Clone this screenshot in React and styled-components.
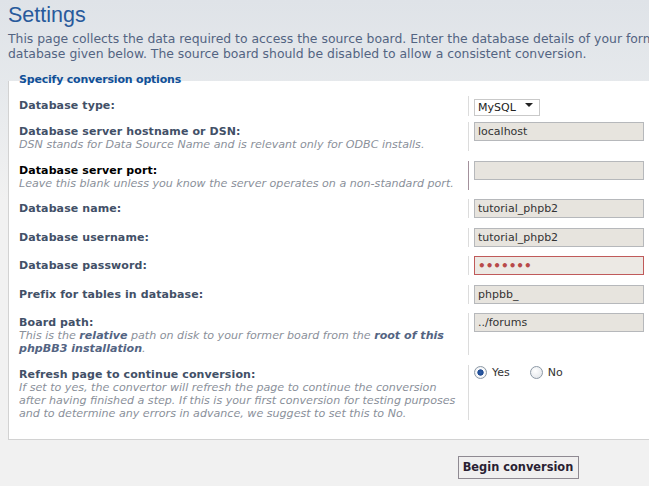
import React from "react";
import styled, { createGlobalStyle } from "styled-components";

const GlobalStyle = createGlobalStyle`
  html, body {
    margin: 0;
    padding: 0;
    overflow: hidden;
  }
  body {
    background: linear-gradient(#dfe3e8 0, #e6e9ec 90px, #f1f1f1 200px) no-repeat #f1f1f1;
    min-height: 486px;
    font-family: "DejaVu Sans", Verdana, sans-serif;
  }
`;

const Page = styled.div`
  width: 1020px;
  padding: 2px 8px 0;
`;

const Title = styled.h1`
  margin: 0;
  font-family: "Liberation Sans", Arial, sans-serif;
  font-weight: normal;
  font-size: 21.5px;
  line-height: 26px;
  color: #285a9c;
`;

const Intro = styled.p`
  margin: 3px 0 0;
  font-size: 12.4px;
  line-height: 15px;
  color: #536482;
  white-space: nowrap;
`;

const Panel = styled.section`
  display: flex;
  flex-direction: column;
  margin-top: 20px;
  padding: 0 10px 19px;
  border: 1px solid #d2d2d2;
  border-top: none;
  background: #fff;
`;

const Legend = styled.h3`
  margin: -8px 0 10px;
  font-size: 11px;
  line-height: 13px;
  font-weight: bold;
  letter-spacing: -0.2px;
  color: #115098;
`;

const Row = styled.dl`
  display: flex;
  margin: 0 0 ${(p) => p.$gap ?? 9.5}px;
`;

const Term = styled.dt`
  width: 449px;
  flex: none;
  padding-top: 3px;
`;

const Label = styled.label`
  display: block;
  font-size: 11px;
  line-height: 13px;
  font-weight: bold;
  letter-spacing: 0.1px;
  color: ${(p) => (p.$hover ? "#000" : "#425067")};
`;

const Explain = styled.span`
  display: block;
  font-size: 11.1px;
  line-height: 13px;
  font-style: italic;
  color: #8a909a;
  b {
    color: #536482;
  }
`;

const Field = styled.dd`
  margin: 0;
  padding-left: 5px;
  border-left: 1px solid ${(p) => (p.$hover ? "#a3919c" : "#dcdcdc")};
  flex: 1;
`;

const TextInput = styled.input`
  display: block;
  box-sizing: border-box;
  width: 170px;
  height: 19px;
  margin: 0;
  padding: 0 3px;
  border: 1px solid ${(p) => (p.$error ? "#c05a5a" : "#b6b8bb")};
  background: ${(p) => (p.$error ? "#ece9e4" : "#e7e4de")};
  font-family: "DejaVu Sans", Verdana, sans-serif;
  font-size: ${(p) => (p.$error ? 12 : 11)}px;
  font-weight: ${(p) => (p.$error ? "bold" : "normal")};
  color: ${(p) => (p.$error ? "#b84a4a" : "#333")};
  outline: none;
`;

const SelectWrap = styled.span`
  position: relative;
  display: inline-block;
  &::after {
    content: "";
    position: absolute;
    right: 7px;
    top: 7px;
    border-left: 4px solid transparent;
    border-right: 4px solid transparent;
    border-top: 4px solid #222;
    pointer-events: none;
  }
`;

const Select = styled.select`
  appearance: none;
  box-sizing: border-box;
  width: 66px;
  height: 17px;
  margin: 0;
  padding: 0 3px;
  border: 1px solid #c9c9c9;
  background: #fff;
  font-family: "DejaVu Sans", Verdana, sans-serif;
  font-size: 11px;
  color: #222;
`;

const RadioGroup = styled.div`
  display: flex;
  align-items: center;
  padding-top: 1px;
  gap: 20px;
`;

const RadioLabel = styled.label`
  display: flex;
  align-items: center;
  gap: 5px;
  font-size: 11px;
  color: #333;
`;

const Radio = styled.input.attrs({ type: "radio" })`
  appearance: none;
  margin: 0;
  width: 13px;
  height: 13px;
  border-radius: 50%;
  border: 1px solid #8d99a6;
  background: radial-gradient(circle at 40% 35%, #fff 0, #dde1e6 100%);
  &:checked {
    background: radial-gradient(circle, #2e5ea8 0, #1e4a92 2.8px, #fff 3.5px, #d8dde3 100%);
  }
`;

const Actions = styled.div`
  display: flex;
  justify-content: center;
  padding-top: 16px;
`;

const Button = styled.button`
  box-sizing: border-box;
  width: 121px;
  height: 23px;
  border: 1px solid #8f8a92;
  background: #f0efef;
  font-family: "DejaVu Sans", Verdana, sans-serif;
  font-size: 11.4px;
  font-weight: bold;
  color: #2a1f33;
  padding: 0;
`;

const rows = [
  { label: "Database server hostname or DSN:", explain: "DSN stands for Data Source Name and is relevant only for ODBC installs.", value: "localhost" },
  { label: "Database server port:", explain: "Leave this blank unless you know the server operates on a non-standard port.", value: "", hover: true },
  { label: "Database name:", value: "tutorial_phpb2" },
  { label: "Database username:", value: "tutorial_phpb2" },
  { label: "Database password:", value: "1234567", type: "password", error: true },
  { label: "Prefix for tables in database:", value: "phpbb_" },
];

export default function App() {
  return (
    <>
      <GlobalStyle />
      <Page>
        <Title>Settings</Title>
        <Intro>
          This page collects the data required to access the source board. Enter the database details of your former board; the convertor will not change anything in the
          <br />
          database given below. The source board should be disabled to allow a consistent conversion.
        </Intro>
        <Panel>
          <Legend>Specify conversion options</Legend>
          <Row $gap={6}>
            <Term>
              <Label>Database type:</Label>
            </Term>
            <Field>
              <SelectWrap>
                <Select defaultValue="mysql">
                  <option value="mysql">MySQL</option>
                </Select>
              </SelectWrap>
            </Field>
          </Row>
          {rows.map((r) => (
            <Row key={r.label}>
              <Term>
                <Label $hover={r.hover}>{r.label}</Label>
                {r.explain && <Explain>{r.explain}</Explain>}
              </Term>
              <Field $hover={r.hover}>
                <TextInput type={r.type || "text"} defaultValue={r.value} $error={r.error} />
              </Field>
            </Row>
          ))}
          <Row>
            <Term>
              <Label>Board path:</Label>
              <Explain>
                This is the <b>relative</b> path on disk to your former board from the <b>root of this</b>
                <br />
                <b>phpBB3 installation</b>.
              </Explain>
            </Term>
            <Field>
              <TextInput defaultValue="../forums" />
            </Field>
          </Row>
          <Row $gap={0}>
            <Term>
              <Label>Refresh page to continue conversion:</Label>
              <Explain>
                If set to yes, the convertor will refresh the page to continue the conversion
                <br />
                after having finished a step. If this is your first conversion for testing purposes
                <br />
                and to determine any errors in advance, we suggest to set this to No.
              </Explain>
            </Term>
            <Field>
              <RadioGroup>
                <RadioLabel>
                  <Radio name="refresh" defaultChecked /> Yes
                </RadioLabel>
                <RadioLabel>
                  <Radio name="refresh" /> No
                </RadioLabel>
              </RadioGroup>
            </Field>
          </Row>
        </Panel>
        <Actions>
          <Button>Begin conversion</Button>
        </Actions>
      </Page>
    </>
  );
}
